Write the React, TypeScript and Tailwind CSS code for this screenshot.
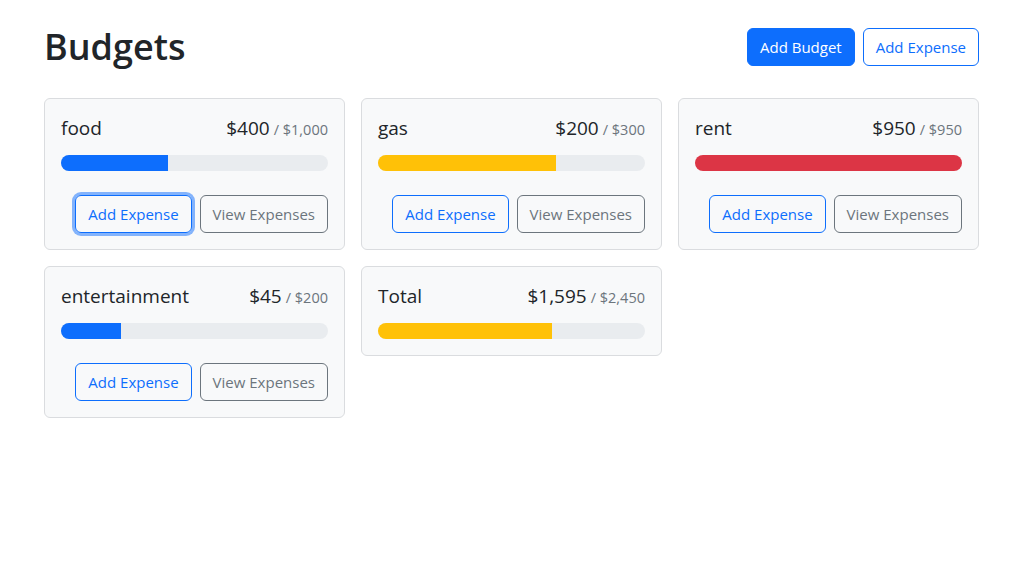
const budgets = [
  { name: "food", amount: 400, max: 1000, color: "bg-[#0d6efd]", focused: true },
  { name: "gas", amount: 200, max: 300, color: "bg-[#ffc107]" },
  { name: "rent", amount: 950, max: 950, color: "bg-[#dc3545]" },
  { name: "entertainment", amount: 45, max: 200, color: "bg-[#0d6efd]" },
];

const fmt = (n: number) => "$" + n.toLocaleString("en-US");

function BudgetCard({
  name,
  amount,
  max,
  color,
  focused,
  hideButtons,
}: {
  name: string;
  amount: number;
  max: number;
  color: string;
  focused?: boolean;
  hideButtons?: boolean;
}) {
  const pct = Math.min(100, (amount / max) * 100);
  return (
    <div className="rounded-[6px] border border-[#dadcdf] bg-[#f8f9fa] p-4">
      <div className="flex h-[30px] items-baseline justify-between text-[19px] leading-[27px] text-[#212529]">
        <div>{name}</div>
        <div className="flex items-baseline">
          {fmt(amount)}
          <span className="ml-1 text-[14.5px] text-[#6c757d]">/ {fmt(max)}</span>
        </div>
      </div>

      <div className="mt-[10px] h-4 overflow-hidden rounded-full bg-[#e9ecef]">
        <div className={`h-full ${color}`} style={{ width: `${pct}%` }} />
      </div>

      {!hideButtons && (
        <div className="mt-6 flex justify-end gap-2 text-[15px]">
          <button
            className={`h-[38px] rounded-[6px] border border-[#0d6efd] bg-transparent px-3 text-[#0d6efd] ${
              focused ? "shadow-[0_0_0_3px_rgba(13,110,253,0.5)]" : ""
            }`}
          >
            Add Expense
          </button>
          <button className="h-[38px] rounded-[6px] border border-[#6c757d] bg-transparent px-3 text-[#6c757d]">
            View Expenses
          </button>
        </div>
      )}
    </div>
  );
}

export default function App() {
  return (
    <div
      className="min-h-screen bg-white text-[16px] text-[#212529]"
      style={{ fontFamily: '"Open Sans", "Noto Sans", sans-serif' }}
    >
      <div className="ml-[44px] w-[935px] pt-[23px]">
        {/* HEADER */}
        <div className="mb-[27px] flex items-center gap-2 text-[15px]">
          <h1 className="mr-auto text-[36px] font-semibold leading-[48px]">Budgets</h1>
          <button className="h-[38px] rounded-[6px] border border-[#0d6efd] bg-[#0d6efd] px-3 text-white">
            Add Budget
          </button>
          <button className="h-[38px] rounded-[6px] border border-[#0d6efd] bg-white px-3 text-[#0d6efd]">
            Add Expense
          </button>
        </div>

        {/* CARDS */}
        <div className="grid grid-cols-3 items-start gap-4">
          {budgets.map((b) => (
            <BudgetCard key={b.name} {...b} />
          ))}
          <BudgetCard name="Total" amount={1595} max={2450} color="bg-[#ffc107]" hideButtons />
        </div>
      </div>
    </div>
  );
}
